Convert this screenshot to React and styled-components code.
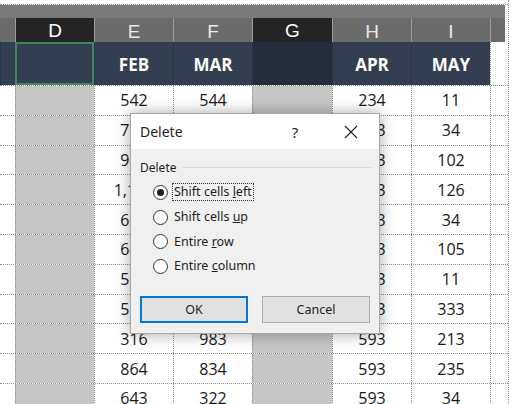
import React from 'react';
import styled, { createGlobalStyle } from 'styled-components';

const GlobalStyle = createGlobalStyle`
    html, body {
        margin: 0;
        padding: 0;
        background: #ffffff;
    }
`;

const COLS = '15px 79px 79px 79px 80px 79px 79px 1fr';

const Page = styled.div`
    position: relative;
    width: 512px;
    height: 404px;
    overflow: hidden;
    background: #ffffff;
    font-family: 'Open Sans', 'Noto Sans', sans-serif;
`;

const Sheet = styled.div`
    width: 509px;
    height: 404px;
    border-right: 1px dotted #8a8a8a;
    box-sizing: border-box;
`;

const TopStrip = styled.div`
    height: 4px;
    border-bottom: 1px dotted #8a8a8a;
`;

const GrayBand = styled.div`
    height: 13px;
    margin-right: 3px;
    background: #7a7a7a;
`;

const LetterRow = styled.div`
    display: grid;
    grid-template-columns: ${COLS};
    height: 24px;
    background: #6b6b6b;
    margin-right: 3px;
`;

const Letter = styled.div`
    display: flex;
    align-items: center;
    justify-content: center;
    font-family: 'Liberation Sans', Arial, sans-serif;
    font-size: 19px;
    color: ${(p) => (p.$active ? '#ffffff' : '#e8e8e8')};
    background: ${(p) => (p.$active ? '#242424' : 'transparent')};
    border-left: 1px solid #9c9c9c;
    border-bottom: ${(p) => (p.$active ? '2px solid #2f7d4f' : '0')};
    box-sizing: border-box;
    padding-top: 2px;
`;

const HeaderRow = styled.div`
    display: grid;
    grid-template-columns: ${COLS};
    height: 43px;
`;

const HeadCell = styled.div`
    display: flex;
    align-items: center;
    justify-content: center;
    background: ${(p) => (p.$dark ? '#262d3a' : p.$blank ? '#ffffff' : '#333f50')};
    border: ${(p) => (p.$selected ? '2px solid #3c8a5b' : '0')};
    border-left: ${(p) => (p.$selected ? '2px solid #3c8a5b' : p.$blank ? '1px dotted #8a8a8a' : '1px solid #2a3444')};
    box-sizing: border-box;
    color: #ffffff;
    font-family: 'Open Sans', sans-serif;
    font-weight: 700;
    font-size: 17px;
    padding-top: 2px;
`;

const DataRow = styled.div`
    display: grid;
    grid-template-columns: ${COLS};
    height: 29.8px;
    border-top: 1px dotted #8a8a8a;
    box-sizing: border-box;
`;

const Cell = styled.div`
    display: flex;
    align-items: center;
    justify-content: center;
    border-left: ${(p) => (p.$edge ? '0' : '1px dotted #8a8a8a')};
    background: ${(p) => (p.$gray ? '#c6c6c6' : '#ffffff')};
    color: #1a1a1a;
    font-family: 'Open Sans', sans-serif;
    font-size: 16px;
`;

const Dialog = styled.div`
    position: absolute;
    left: 130px;
    top: 113px;
    width: 250px;
    height: 221px;
    background: #f0f0f0;
    border: 1px solid #a8a8a8;
    box-sizing: border-box;
    box-shadow: 0 0 14px rgba(0, 0, 0, 0.35);
    font-family: 'Noto Sans', 'Open Sans', sans-serif;
    color: #1e1e1e;
    display: flex;
    flex-direction: column;
`;

const TitleBar = styled.div`
    display: flex;
    align-items: center;
    height: 35px;
    background: #ffffff;
    padding: 0 0 0 9px;
    font-size: 14px;
`;

const Title = styled.div`
    flex: 1;
`;

const Help = styled.div`
    width: 20px;
    margin-right: 34px;
    text-align: center;
    font-size: 15px;
`;

const Close = styled.div`
    width: 24px;
    margin-right: 16px;
    display: flex;
    align-items: center;
    justify-content: center;
`;

const Body = styled.div`
    padding: 9px 8px 0 9px;
    display: flex;
    flex-direction: column;
`;

const Group = styled.div`
    display: flex;
    align-items: center;
    gap: 6px;
    font-size: 12px;
    height: 18px;
    &::after {
        content: '';
        flex: 1;
        height: 1px;
        background: #d8d8d8;
    }
`;

const Options = styled.div`
    display: flex;
    flex-direction: column;
    padding: 4px 0 0 13px;
`;

const Option = styled.div`
    display: flex;
    align-items: center;
    height: 24.7px;
    gap: 5px;
    font-size: 12.5px;
`;

const Radio = styled.span`
    width: 15px;
    height: 15px;
    border: 1px solid #333;
    border-radius: 50%;
    background: #ffffff;
    box-sizing: border-box;
    display: flex;
    align-items: center;
    justify-content: center;
    &::after {
        content: '';
        width: 7px;
        height: 7px;
        border-radius: 50%;
        background: ${(p) => (p.$checked ? '#1e1e1e' : 'transparent')};
    }
`;

const Label = styled.span`
    padding: 0 1px;
    outline: ${(p) => (p.$focus ? '1px dotted #333' : 'none')};
    line-height: 16px;
`;

const Key = styled.span`
    text-decoration: underline;
`;

const Buttons = styled.div`
    display: flex;
    gap: 14px;
    margin-top: 17px;
`;

const Button = styled.div`
    width: 108px;
    height: 27px;
    box-sizing: border-box;
    display: flex;
    align-items: center;
    justify-content: center;
    background: #e1e1e1;
    border: ${(p) => (p.$primary ? '2px solid #0078d7' : '1px solid #adadad')};
    font-size: 12.5px;
`;

const rows = [
    ['542', '544', '234', '11'],
    ['758', '312', '543', '34'],
    ['943', '765', '213', '102'],
    ['1,120', '654', '593', '126'],
    ['634', '321', '593', '34'],
    ['645', '872', '593', '105'],
    ['534', '981', '593', '11'],
    ['512', '432', '593', '333'],
    ['316', '983', '593', '213'],
    ['864', '834', '593', '235'],
    ['643', '322', '593', '34'],
];

const options = [
    { pre: 'Shift cells ', key: 'l', post: 'eft', checked: true },
    { pre: 'Shift cells ', key: 'u', post: 'p' },
    { pre: 'Entire ', key: 'r', post: 'ow' },
    { pre: 'Entire ', key: 'c', post: 'olumn' },
];

function App() {
    return (
        <Page>
            <GlobalStyle />
            <Sheet>
                <TopStrip />
                <GrayBand />
                <LetterRow>
                    <div />
                    <Letter $active>D</Letter>
                    <Letter>E</Letter>
                    <Letter>F</Letter>
                    <Letter $active>G</Letter>
                    <Letter>H</Letter>
                    <Letter>I</Letter>
                    <Letter />
                </LetterRow>
                <HeaderRow>
                    <HeadCell />
                    <HeadCell $selected />
                    <HeadCell>FEB</HeadCell>
                    <HeadCell>MAR</HeadCell>
                    <HeadCell $dark />
                    <HeadCell>APR</HeadCell>
                    <HeadCell>MAY</HeadCell>
                    <HeadCell $blank />
                </HeaderRow>
                {rows.map((r, i) => (
                    <DataRow key={i}>
                        <Cell $edge />
                        <Cell $gray />
                        <Cell>{r[0]}</Cell>
                        <Cell>{r[1]}</Cell>
                        <Cell $gray />
                        <Cell>{r[2]}</Cell>
                        <Cell>{r[3]}</Cell>
                        <Cell />
                    </DataRow>
                ))}
            </Sheet>
            <Dialog>
                <TitleBar>
                    <Title>Delete</Title>
                    <Help>?</Help>
                    <Close>
                        <svg width="14" height="14" viewBox="0 0 14 14">
                            <path d="M1 1 L13 13 M13 1 L1 13" stroke="#1e1e1e" strokeWidth="1.1" />
                        </svg>
                    </Close>
                </TitleBar>
                <Body>
                    <Group>Delete</Group>
                    <Options>
                        {options.map((o, i) => (
                            <Option key={i}>
                                <Radio $checked={o.checked} />
                                <Label $focus={o.checked}>
                                    {o.pre}
                                    <Key>{o.key}</Key>
                                    {o.post}
                                </Label>
                            </Option>
                        ))}
                    </Options>
                    <Buttons>
                        <Button $primary>OK</Button>
                        <Button>Cancel</Button>
                    </Buttons>
                </Body>
            </Dialog>
        </Page>
    );
}

export default App;
